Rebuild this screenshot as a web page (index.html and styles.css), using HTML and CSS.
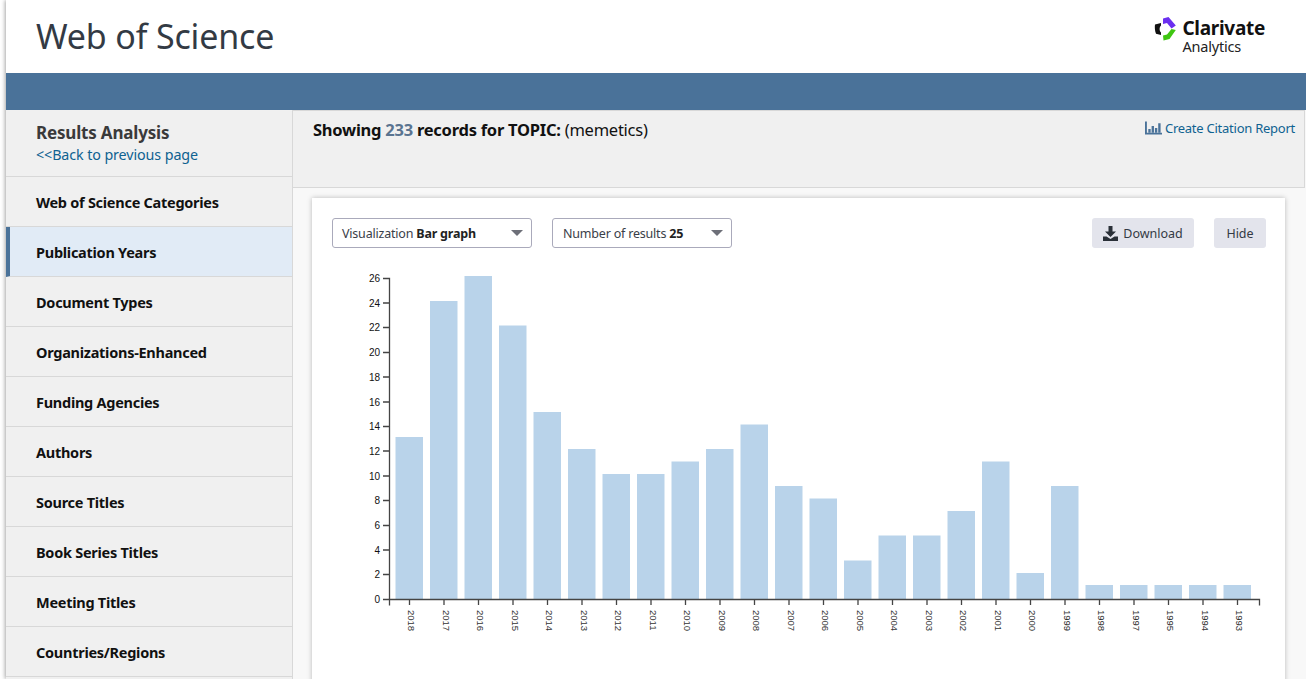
FILE: index.html
```html
<!DOCTYPE html>
<html lang="en">
<head>
<meta charset="utf-8">
<title>Web of Science - Results Analysis</title>
<link rel="stylesheet" href="styles.css">
</head>
<body>
<div class="page">
  <header class="top">
    <h1 class="brand">Web of Science</h1>
    <div class="logo">
      <svg class="logo-mark" width="22" height="24" viewBox="0 0 22 24">
        <path class="lm-black" d="M1 7.500 7 6v2.500C5.200 10 5.200 14 7 15.500V18L2 16.800C.8 14 .6 10 1 7.500z"/>
        <path class="lm-purple" d="M9 1.500 14.500 0 21.800 8.500 17.500 11.500 13 6 9 7z"/>
        <path class="lm-green" d="M21.800 13 15.500 22 9.500 23.500 9 18.500 13 17.500 17.500 12z"/>
      </svg>
      <div class="logo-text">
        <span class="logo-name">Clarivate</span>
        <span class="logo-sub">Analytics</span>
      </div>
    </div>
  </header>
  <div class="band"></div>
  <div class="content">
    <aside class="side">
      <div class="side-head">
        <div class="side-title">Results Analysis</div>
        <a class="back" href="#">&lt;&lt;Back to previous page</a>
      </div>
      <div class="side-item">Web of Science Categories</div>
      <div class="side-item active">Publication Years</div>
      <div class="side-item">Document Types</div>
      <div class="side-item">Organizations-Enhanced</div>
      <div class="side-item">Funding Agencies</div>
      <div class="side-item">Authors</div>
      <div class="side-item">Source Titles</div>
      <div class="side-item">Book Series Titles</div>
      <div class="side-item">Meeting Titles</div>
      <div class="side-item">Countries/Regions</div>
    </aside>
    <main class="main">
      <section class="summary">
        <p class="showing"><b>Showing <span class="count">233</span> records for TOPIC:</b> (memetics)</p>
        <a class="report" href="#">
          <svg class="report-icon" width="17" height="14" viewBox="0 0 18 14">
            <path class="ri" d="M0 0h2v12h16v2H0z"/>
            <path class="ri" d="M3.500 8h2.500v4H3.500zM7 5h2.500v7H7zM10.500 7H13v5h-2.500zM14 2h2.500v10H14z"/>
          </svg>Create Citation Report</a>
      </section>
      <section class="card">
        <div class="controls">
          <div class="select sel-vis"><span>Visualization <b>Bar graph</b></span><i class="caret"></i></div>
          <div class="select sel-num"><span>Number of results <b>25</b></span><i class="caret"></i></div>
          <div class="spacer"></div>
          <button class="btn btn-dl">
            <svg width="15" height="15" viewBox="0 0 15 15"><path class="dl" d="M5.500 0h4v5.500H13L7.500 11 2 5.500h3.500zM0 10.500h3.500L7.500 13l4-2.500H15V15H0z"/></svg>
            Download</button>
          <button class="btn btn-hide">Hide</button>
        </div>
        <svg class="chart" width="973" height="410" viewBox="312 268 973 410">
          <g class="bars">
            <rect x="395.500" y="437" width="27.500" height="162"/>
            <rect x="430" y="301" width="27.500" height="298"/>
            <rect x="464.500" y="276" width="27.500" height="323"/>
            <rect x="499" y="325.500" width="27.500" height="273.500"/>
            <rect x="533.500" y="412" width="27.500" height="187"/>
            <rect x="568" y="449" width="27.500" height="150"/>
            <rect x="602.500" y="474" width="27.500" height="125"/>
            <rect x="637" y="474" width="27.500" height="125"/>
            <rect x="671.500" y="461.500" width="27.500" height="137.500"/>
            <rect x="706" y="449" width="27.500" height="150"/>
            <rect x="740.500" y="424.500" width="27.500" height="174.500"/>
            <rect x="775" y="486" width="27.500" height="113"/>
            <rect x="809.500" y="498.500" width="27.500" height="100.500"/>
            <rect x="844" y="560.500" width="27.500" height="38.500"/>
            <rect x="878.500" y="535.500" width="27.500" height="63.500"/>
            <rect x="913" y="535.500" width="27.500" height="63.500"/>
            <rect x="947.500" y="511" width="27.500" height="88"/>
            <rect x="982" y="461.500" width="27.500" height="137.500"/>
            <rect x="1016.500" y="573" width="27.500" height="26"/>
            <rect x="1051" y="486" width="27.500" height="113"/>
            <rect x="1085.500" y="585" width="27.500" height="14"/>
            <rect x="1120" y="585" width="27.500" height="14"/>
            <rect x="1154.500" y="585" width="27.500" height="14"/>
            <rect x="1189" y="585" width="27.500" height="14"/>
            <rect x="1223.500" y="585" width="27.500" height="14"/>
          </g>
          <path class="axis" d="M383 278.500h6.500V599.500M383 303h6M383 327.500h6M383 352.500h6M383 377h6M383 402h6M383 426.500h6M383 451h6M383 476h6M383 500.500h6M383 525.500h6M383 550h6M383 574.500h6M383 599.500h6"/>
          <path class="axis" d="M389.500 605.500V599.500H1259.500V605.500M409.500 600v5M444 600v5M478.500 600v5M513 600v5M547.500 600v5M582 600v5M616.500 600v5M651 600v5M685.500 600v5M720 600v5M754.500 600v5M789 600v5M823.500 600v5M858 600v5M892.500 600v5M927 600v5M961.500 600v5M996 600v5M1030.500 600v5M1065 600v5M1099.500 600v5M1134 600v5M1168.500 600v5M1203 600v5M1237.500 600v5"/>
          <g class="ylabels">
            <text x="380" y="282">26</text><text x="380" y="306.500">24</text><text x="380" y="331">22</text>
            <text x="380" y="356">20</text><text x="380" y="380.500">18</text><text x="380" y="405.500">16</text>
            <text x="380" y="430">14</text><text x="380" y="454.500">12</text><text x="380" y="479.500">10</text>
            <text x="380" y="504">8</text><text x="380" y="529">6</text><text x="380" y="553.500">4</text>
            <text x="380" y="578">2</text><text x="380" y="603">0</text>
          </g>
          <g class="xlabels">
            <text transform="translate(408 610) rotate(90)">2018</text>
            <text transform="translate(442.500 610) rotate(90)">2017</text>
            <text transform="translate(477 610) rotate(90)">2016</text>
            <text transform="translate(511.500 610) rotate(90)">2015</text>
            <text transform="translate(546 610) rotate(90)">2014</text>
            <text transform="translate(580.500 610) rotate(90)">2013</text>
            <text transform="translate(615 610) rotate(90)">2012</text>
            <text transform="translate(649.500 610) rotate(90)">2011</text>
            <text transform="translate(684 610) rotate(90)">2010</text>
            <text transform="translate(718.500 610) rotate(90)">2009</text>
            <text transform="translate(753 610) rotate(90)">2008</text>
            <text transform="translate(787.500 610) rotate(90)">2007</text>
            <text transform="translate(822 610) rotate(90)">2006</text>
            <text transform="translate(856.500 610) rotate(90)">2005</text>
            <text transform="translate(891 610) rotate(90)">2004</text>
            <text transform="translate(925.500 610) rotate(90)">2003</text>
            <text transform="translate(960 610) rotate(90)">2002</text>
            <text transform="translate(994.500 610) rotate(90)">2001</text>
            <text transform="translate(1029 610) rotate(90)">2000</text>
            <text transform="translate(1063.500 610) rotate(90)">1999</text>
            <text transform="translate(1098 610) rotate(90)">1998</text>
            <text transform="translate(1132.500 610) rotate(90)">1997</text>
            <text transform="translate(1167 610) rotate(90)">1995</text>
            <text transform="translate(1201.500 610) rotate(90)">1994</text>
            <text transform="translate(1236 610) rotate(90)">1993</text>
          </g>
        </svg>
      </section>
    </main>
  </div>
</div>
</body>
</html>
```
FILE: styles.css
```css
* { box-sizing: border-box; }
html, body { margin: 0; height: 100%; overflow: hidden; background: #fff; }
body { font-family: "Noto Sans", "Open Sans", sans-serif; color: #222; }
.page { margin-left: 6px; height: 679px; overflow: hidden; box-shadow: -1px 0 4px rgba(0,0,0,.35); background: #f8f8f8; }
.top { height: 73px; background: #fff; display: flex; align-items: flex-start; justify-content: space-between; padding: 0 41px 0 30px; }
.brand { margin: 14px 0 0; font-size: 34px; line-height: 44px; font-weight: 400; color: #333a44; letter-spacing: -.15px; }
.logo { display: flex; margin-top: 17px; gap: 6px; }
.lm-black { fill: #111; }
.lm-purple { fill: #6b2ff0; }
.lm-green { fill: #3fc611; }
.logo-text { display: flex; flex-direction: column; margin-top: 1px; }
.logo-name { font-size: 19px; line-height: 21px; font-weight: 700; color: #111; letter-spacing: -.3px; }
.logo-sub { font-size: 14.500px; line-height: 14px; color: #222; letter-spacing: -.2px; }
.band { height: 37px; background: #4a7299; }
.content { display: flex; height: 569px; }
.side { width: 287px; flex: none; background: #f0f0f0; border-right: 1px solid #d8d8d8; }
.side-head { height: 67px; padding: 11px 30px 0; border-bottom: 1px solid #d8d8d8; }
.side-title { font-size: 17px; line-height: 24px; font-weight: 700; color: #3a3a3a; letter-spacing: -.18px; }
.back { display: block; font-size: 14.300px; line-height: 20px; color: #0f6290; text-decoration: none; letter-spacing: -.1px; }
.side-item { height: 50px; padding-left: 30px; display: flex; align-items: center; font-size: 14.500px; font-weight: 700; color: #111; border-bottom: 1px solid #d8d8d8; letter-spacing: -.27px; }
.side-item.active { background: #e1ebf6; border-left: 4px solid #4a7299; padding-left: 26px; }
.main { flex: 1; min-width: 0; margin-right: 1px; }
.summary { height: 78px; background: #f0f0f0; border: 1px solid #d8d8d8; border-left: 0; display: flex; justify-content: space-between; padding: 7px 9px 0 20px; }
.showing { margin: 0; font-size: 16.500px; line-height: 23px; color: #111; letter-spacing: -.25px; }
.count { color: #5a7490; }
.report { display: flex; align-items: flex-start; gap: 3px; font-size: 13px; line-height: 18px; color: #0f6290; text-decoration: none; letter-spacing: -.25px; margin-top: 1px; }
.report-icon { margin-top: 2px; }
.ri { fill: #4a7299; }
.card { margin: 10px 20px 0 19px; height: 500px; background: #fff; box-shadow: 0 0 5px rgba(0,0,0,.25); }
.controls { display: flex; align-items: center; padding: 20px 19px 0 20px; height: 50px; margin-bottom: 20px; }
.select { height: 30px; border: 1px solid #aab; border-radius: 3px; display: flex; align-items: center; justify-content: space-between; padding: 0 8px 0 9px; font-size: 12.500px; color: #3a4048; background: #fff; letter-spacing: -.2px; }
.select b { color: #222; }
.sel-vis { width: 200px; margin-right: 20px; }
.sel-num { width: 180px; }
.sel-num span { margin-left: 1px; }
.caret { width: 0; height: 0; border-left: 6px solid transparent; border-right: 6px solid transparent; border-top: 6px solid #6d6f78; }
.spacer { flex: 1; }
.btn { height: 30px; border: 0; border-radius: 3px; background: #e3e4ec; font: inherit; font-size: 12.500px; color: #333a44; display: flex; align-items: center; justify-content: center; gap: 5px; padding: 0; }
.btn-dl { width: 102px; margin-right: 20px; }
.btn-hide { width: 52px; }
.dl { fill: #2a3038; }
.chart { display: block; }
.bars rect { fill: #b9d3ea; }
.axis { fill: none; stroke: #444; stroke-width: 1.300; }
.ylabels text { font-family: "Liberation Sans", sans-serif; font-size: 10px; fill: #111; text-anchor: end; }
.xlabels text { font-family: "Liberation Sans", sans-serif; font-size: 9.500px; fill: #333; }
```
